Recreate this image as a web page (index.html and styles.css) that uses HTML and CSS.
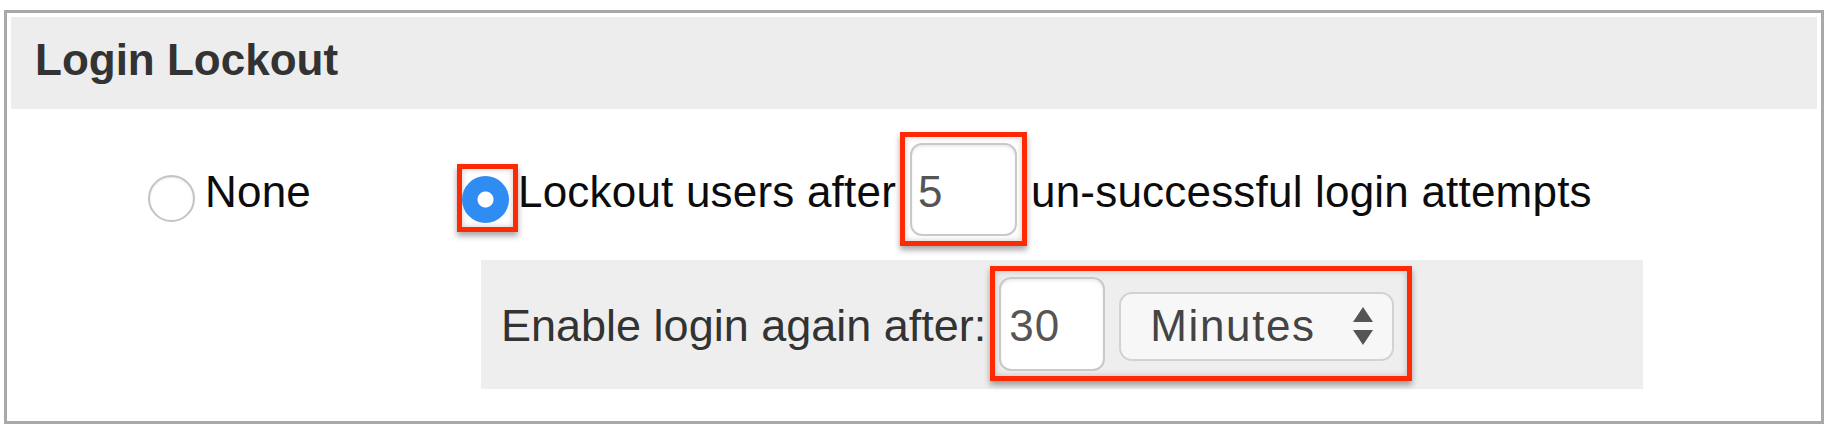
FILE: index.html
```html
<!DOCTYPE html>
<html lang="en">
<head>
<meta charset="utf-8">
<title>Login Lockout</title>
<link rel="stylesheet" href="styles.css">
</head>
<body>
<section class="panel">
  <h2 class="panel-head">Login Lockout</h2>
  <div class="panel-body">
    <div class="row-main"><span class="radio"></span><span class="opt-text">None</span><span class="mark mark-radio"><span class="radio radio-on"></span></span><span>Lockout users after</span><span class="mark mark-field mark-count"><input class="field field-count" type="text" value="5"></span><span class="after">un-successful login attempts</span></div>
    <div class="row-delay">
      <span class="delay-label">Enable login again after:</span>
      <span class="mark mark-field mark-delay">
        <input class="field field-delay" type="text" value="30">
        <span class="select">
          <span class="select-text">Minutes</span>
          <svg class="select-arrows" width="20" height="38" viewBox="0 0 20 38"><path d="M10 0 L20 15 L0 15 Z M0 23 L20 23 L10 38 Z" fill="#555"/></svg>
        </span>
      </span>
    </div>
  </div>
</section>
</body>
</html>
```
FILE: styles.css
```css
html, body {
  margin: 0;
  padding: 0;
  background: #fff;
}

body {
  font-family: "Liberation Sans", Arial, Helvetica, sans-serif;
  height: 426px;
  overflow: hidden;
}

.panel {
  box-sizing: border-box;
  margin: 10px 0 0 4px;
  width: 1820px;
  height: 414px;
  border: 3px solid #a9a9a9;
  padding: 4px;
}

.panel-head {
  margin: 0;
  box-sizing: border-box;
  height: 92px;
  padding: 18px 0 0 24px;
  background: #ededed;
  color: #333;
  font-size: 44px;
  font-weight: bold;
  line-height: 50px;
}

.row-main {
  margin-top: 23px;
  padding-left: 137px;
  white-space: nowrap;
  font-size: 44px;
  line-height: 50px;
  letter-spacing: 0.2px;
  color: #0c0c0c;
}

.radio {
  display: inline-block;
  box-sizing: border-box;
  width: 47px;
  height: 47px;
  border-radius: 50%;
  border: 2px solid #c3c3c3;
  background: #fff;
  box-shadow: inset 0 1px 2px rgba(0, 0, 0, 0.08);
  vertical-align: -15px;
  margin-right: 10px;
}

.opt-text {
  margin-right: 146px;
}

.mark {
  border: 5px solid #fe2a05;
  box-shadow: 0 4px 6px rgba(0, 0, 0, 0.35), inset 0 0 6px rgba(0, 0, 0, 0.22);
}

.mark-radio {
  display: inline-block;
  overflow: hidden;
  padding: 7px 4px 4px 0;
  font-size: 0;
  line-height: 0;
  vertical-align: -25px;
}

.radio-on {
  display: block;
  margin: 0;
  border: none;
  box-shadow: none;
  background: radial-gradient(circle, #fff 0, #fff 7.5px, #2e8cf2 8.5px);
}

.mark-field {
  display: inline-flex;
  align-items: baseline;
  vertical-align: baseline;
  letter-spacing: 0;
}

.mark-count {
  margin-left: 4px;
  padding: 6px 5px 5px;
}

.field {
  box-sizing: border-box;
  border: 2px solid #c9c9c9;
  border-radius: 12px;
  background: #fff;
  box-shadow: inset 0 2px 3px rgba(0, 0, 0, 0.08);
  font-family: "Liberation Sans", Arial, Helvetica, sans-serif;
  font-size: 44px;
  color: #555;
  padding: 4px 0 0 6px;
  margin: 0;
  outline: none;
}

.field-count {
  width: 107px;
  height: 93px;
}

.after {
  margin-left: 4px;
}

.row-delay {
  box-sizing: border-box;
  margin: 14px 0 0 470px;
  width: 1162px;
  height: 129px;
  padding: 6px 0 0 20px;
  background: #eeeeee;
  display: flex;
  align-items: baseline;
  font-size: 44px;
  color: #333;
  white-space: nowrap;
}

.delay-label {
  font-size: 45px;
}

.mark-delay {
  margin-left: 4px;
  padding: 6px 13px 5px 4px;
}

.field-delay {
  width: 106px;
  height: 94px;
  padding-left: 8px;
  letter-spacing: 0.8px;
}

.select {
  display: inline-flex;
  align-items: center;
  box-sizing: border-box;
  height: 69px;
  margin-left: 14px;
  padding: 0 19px 0 29px;
  border: 2px solid #d2d2d2;
  border-radius: 13px;
  background: #f7f7f7;
  color: #444;
}

.select-text {
  letter-spacing: 1.6px;
  margin-right: 37px;
}

.select-arrows {
  display: block;
}
```
